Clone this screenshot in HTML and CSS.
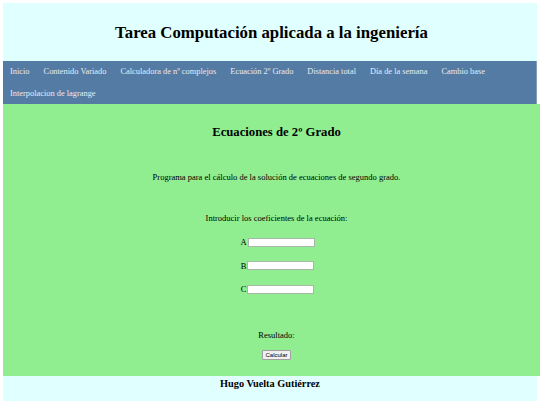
FILE: index.html
```html
<!DOCTYPE html>
<html lang="es">
<head>
<meta charset="utf-8">
<title>Ecuaciones de 2º Grado</title>
<link rel="stylesheet" href="styles.css">
</head>
<body>
<header class="top">
  <h1 class="title">Tarea Computación aplicada a la ingeniería</h1>
</header>
<nav class="menu">
  <a href="#">Inicio</a>
  <a href="#">Contenido Variado</a>
  <a href="#">Calculadora de nº complejos</a>
  <a href="#">Ecuación 2º Grado</a>
  <a href="#">Distancia total</a>
  <a href="#">Día de la semana</a>
  <a href="#">Cambio base</a>
  <a href="#">Interpolacion de lagrange</a>
</nav>
<main class="content">
  <h2 class="heading">Ecuaciones de 2º Grado</h2>
  <p class="line intro">Programa para el cálculo de la solución de ecuaciones de segundo grado.</p>
  <p class="line coef">Introducir los coeficientes de la ecuación:</p>
  <div class="row"><label>A</label><input class="field" type="text"></div>
  <div class="row"><label>B</label><input class="field" type="text"></div>
  <div class="row"><label>C</label><input class="field" type="text"></div>
  <p class="line result">Resultado:</p>
  <button class="btn" type="button">Calcular</button>
</main>
<footer class="bottom">Hugo Vuelta Gutiérrez</footer>
</body>
</html>
```
FILE: styles.css
```css
html, body {
  margin: 0;
  padding: 0;
  background: #ffffff;
}
body {
  padding: 3px 3px 0 3px;
  font-family: "Liberation Serif", "Times New Roman", serif;
  color: #000;
  overflow: hidden;
}
.top {
  background: #e0ffff;
  height: 58px;
  display: flex;
  align-items: center;
  justify-content: center;
}
.title {
  margin: 0;
  font-size: 16.8px;
  font-weight: bold;
  line-height: 20px;
  padding-top: 2px;
  padding-left: 3px;
}
.menu {
  background: #547ba3;
  height: 43px;
  display: flex;
  flex-wrap: wrap;
  align-content: flex-start;
  padding: 0;
  box-sizing: border-box;
  border-right: 1px solid #8a9fb5;
}
.menu a {
  color: #e6ecf3;
  text-decoration: none;
  font-size: 8.4px;
  line-height: 21.5px;
  padding: 0 7px 0 7px;
}
.content {
  background: #90ee90;
  margin-right: -3px;
  padding-left: 10px;
  height: 272px;
  display: flex;
  flex-direction: column;
  align-items: center;
}
.heading {
  margin: 20px 0 0 0;
  font-size: 12.7px;
  line-height: 16px;
  font-weight: bold;
}
.line {
  margin: 0;
  font-size: 8.5px;
  line-height: 12px;
}
.intro { margin-top: 31px; }
.coef { margin-top: 29px; }
.row {
  display: flex;
  align-items: center;
  height: 11px;
  margin-top: 12.5px;
  font-size: 8.5px;
  margin-left: 2px;
}
.row label { margin-right: 1px; }
.field {
  width: 67px;
  height: 9px;
  box-sizing: border-box;
  border: 1px solid #a8b8a8;
  background: #fff;
  padding: 0;
  margin: 0;
}
.result { margin-top: 34.5px; }
.btn {
  margin-top: 9px;
  height: 10px;
  padding: 0 2px;
  font-family: "Liberation Sans", Arial, sans-serif;
  font-size: 6px;
  line-height: 8px;
  background: #f0f0f0;
  border: 1px solid #a0a0a0;
  border-radius: 1px;
  color: #000;
}
.bottom {
  background: #e0ffff;
  height: 25px;
  text-align: center;
  font-weight: bold;
  font-size: 10.3px;
  line-height: 16px;
}
```
